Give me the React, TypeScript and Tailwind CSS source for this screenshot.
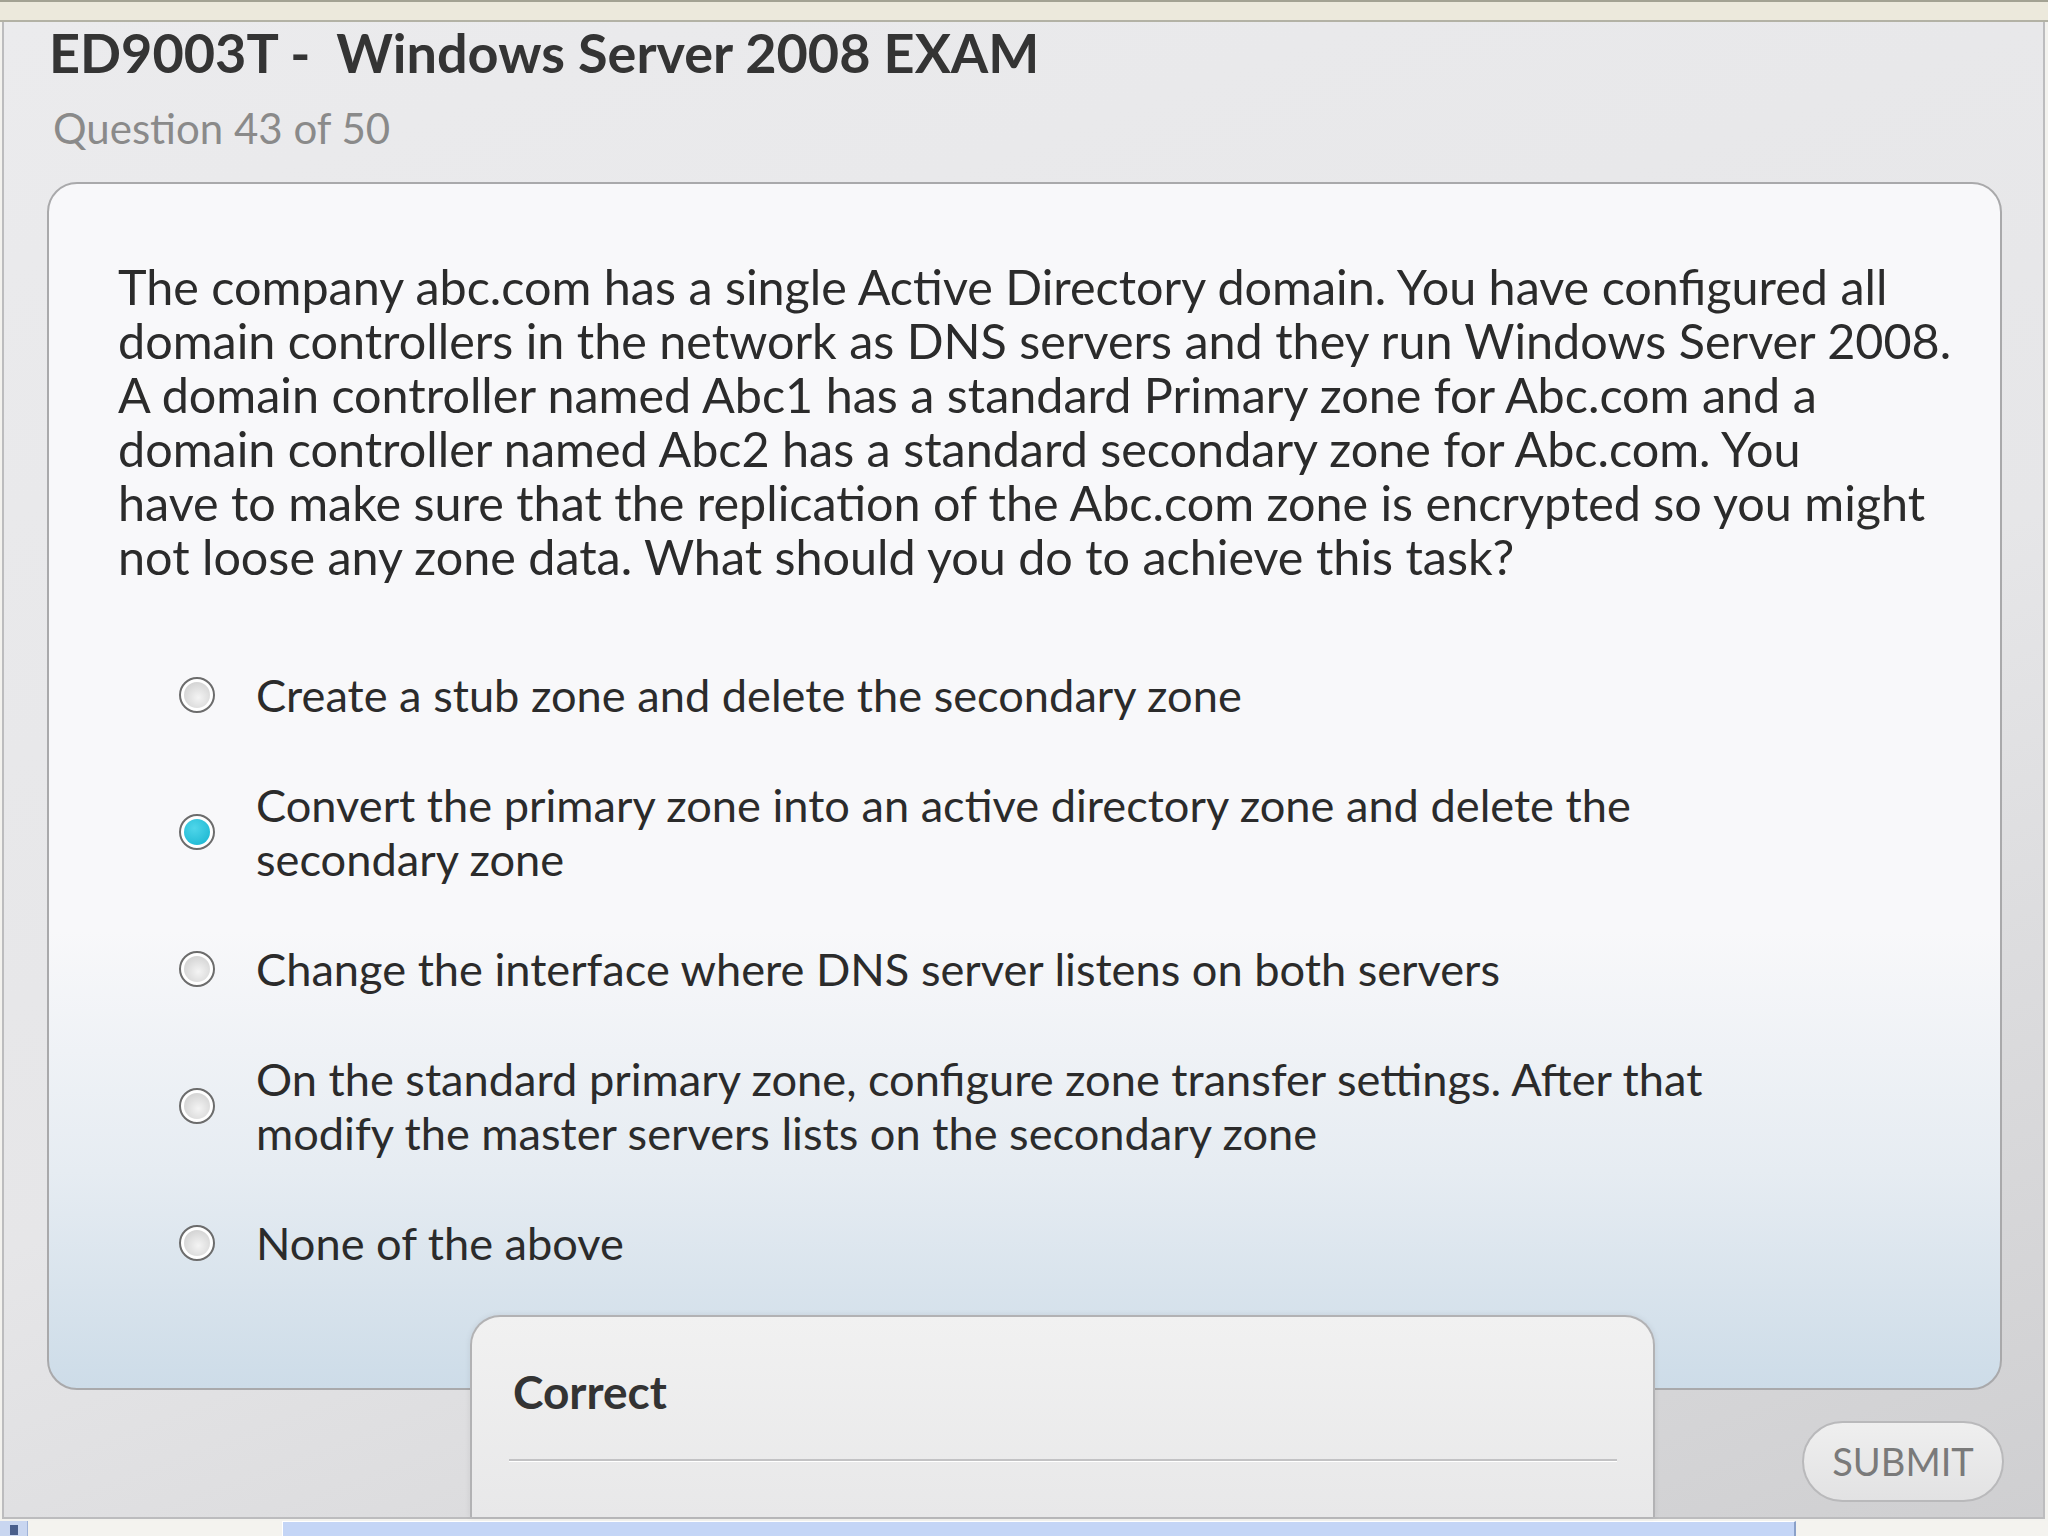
import React from 'react';

const QUESTION_LINES = [
  'The company abc.com has a single Active Directory domain. You have configured all',
  'domain controllers in the network as DNS servers and they run Windows Server 2008.',
  'A domain controller named Abc1 has a standard Primary zone for Abc.com and a',
  'domain controller named Abc2 has a standard secondary zone for Abc.com. You',
  'have to make sure that the replication of the Abc.com zone is encrypted so you might',
  'not loose any zone data. What should you do to achieve this task?',
];

const OPTIONS: { lines: string[]; checked?: boolean }[] = [
  { lines: ['Create a stub zone and delete the secondary zone'] },
  { lines: ['Convert the primary zone into an active directory zone and delete the', 'secondary zone'], checked: true },
  { lines: ['Change the interface where DNS server listens on both servers'] },
  { lines: ['On the standard primary zone, configure zone transfer settings. After that', 'modify the master servers lists on the secondary zone'] },
  { lines: ['None of the above'] },
];

const Radio: React.FC<{ checked?: boolean }> = ({ checked }) => (
  <div className="w-[36px] h-[36px] shrink-0 rounded-full border-2 border-[#6c6c6c] p-[3px] bg-white">
    {checked ? (
      <div className="w-full h-full rounded-full bg-[radial-gradient(circle_at_40%_35%,#4fd6ea,#15b3cf)]" />
    ) : (
      <div className="w-full h-full rounded-full bg-[radial-gradient(circle_at_55%_60%,#f4f4f4,#c9c9c9)]" />
    )}
  </div>
);

export default function App() {
  return (
    <div className="w-[2048px] h-[1536px] overflow-hidden flex flex-col bg-[#f3f2ee] font-['Lato','Open_Sans',sans-serif]">
      {/* window frame strip */}
      <div className="h-[22px] shrink-0 border-t-2 border-b-2 border-t-[#a3a293] border-b-[#b3b2a5] bg-[#ece9dc]" />

      {/* exam panel */}
      <div className="relative h-[1497px] shrink-0 ml-[2px] mr-[3px] border-l-2 border-r-2 border-b-2 border-[#bcbcbe] bg-[linear-gradient(160deg,#ebebed_0%,#e6e6e8_55%,#cfcfd1_100%)]">
        <div className="pl-[45px] pt-[1px] text-[54px] leading-[60px] font-bold text-[#343434]">
          ED9003T -{'\u00a0'} Windows Server 2008 EXAM
        </div>
        <div className="pl-[49px] mt-[22px] text-[42px] leading-[46px] text-[#8a8a8a]">Question 43 of 50</div>

        {/* question card */}
        <div className="mt-[31px] ml-[43px] mr-[41px] h-[1208px] rounded-[30px] border-2 border-[#a9a9ab] bg-[linear-gradient(180deg,#f8f8fa_0%,#f8f8fa_62%,#e6ecf2_82%,#cddce8_100%)] pt-[75px] pl-[69px]">
          <p className="text-[48.5px] leading-[54px] text-[#2b2b2b]">
            {QUESTION_LINES.map((l, i) => (
              <React.Fragment key={i}>
                {l}
                {i < QUESTION_LINES.length - 1 && <br />}
              </React.Fragment>
            ))}
          </p>

          <div className="mt-[85px] pl-[61px] flex flex-col gap-[56px]">
            {OPTIONS.map((o, i) => (
              <div key={i} className="flex items-center gap-[41px]">
                <Radio checked={o.checked} />
                <div className="text-[45.2px] leading-[54px] text-[#2b2b2b]">
                  {o.lines.map((l, j) => (
                    <div key={j}>{l}</div>
                  ))}
                </div>
              </div>
            ))}
          </div>
        </div>

        {/* answer feedback popup, runs down to the panel's bottom edge */}
        <div className="absolute left-[466px] top-[1293px] w-[1185px] h-[202px] rounded-t-[30px] border-2 border-b-0 border-[#b2b2b4] bg-[linear-gradient(180deg,#f1f1f1,#e8e8e9)] shadow-[0_0_6px_rgba(0,0,0,0.08)] pt-[47px]">
          <div className="pl-[41px] text-[46px] leading-[56px] font-bold text-[#333]">Correct</div>
          <div className="mt-[39px] ml-[37px] mr-[36px] h-[3px] bg-[#c2c2c4] border-b border-white" />
        </div>

        <button className="absolute left-[1798px] top-[1399px] w-[202px] h-[81px] rounded-full border-2 border-[#b9b9bb] bg-[linear-gradient(180deg,#efefef,#e2e2e3)] text-[38px] text-[#7a7a7a] font-['Lato',sans-serif]">
          SUBMIT
        </button>
      </div>

      {/* taskbar strip */}
      <div className="flex-1 flex items-stretch pt-[2px]">
        <div className="w-[28px] bg-[#c9d6f0] border-r border-[#9fb2d8] flex justify-center">
          <div className="w-[8px] h-[10px] mt-[4px] bg-[#4a5f8c]" />
        </div>
        <div className="w-[254px] bg-[#f4f3ef]" />
        <div className="w-[1514px] bg-[#c4d5f6] border-t border-l border-white border-r-2 border-r-[#8aa0c8]" />
        <div className="flex-1 bg-[#f4f3ef]" />
      </div>
    </div>
  );
}
